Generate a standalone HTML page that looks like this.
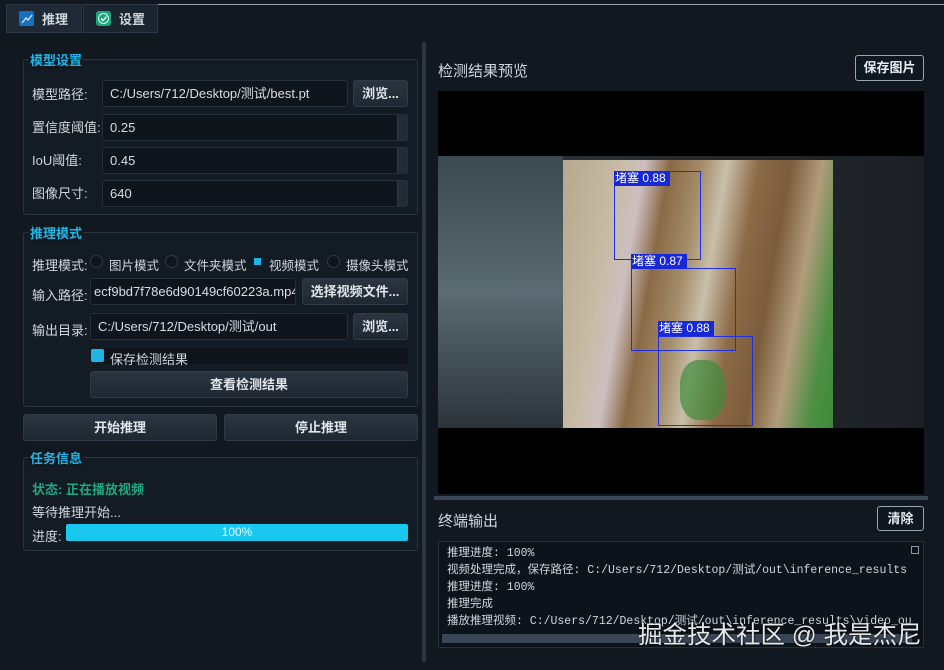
<!DOCTYPE html>
<html><head><meta charset="utf-8"><style>
*{margin:0;padding:0;box-sizing:border-box}
body{width:944px;height:670px;background:#111820;font-family:"Liberation Sans","Noto Sans CJK SC",sans-serif;font-size:13px;color:#d8dde3;position:relative;overflow:hidden}
.a{position:absolute}
.tab{position:absolute;top:4px;height:29px;background:#1b2530;border:1px solid #2c3845;color:#cfd6dd;font-size:13px;display:flex;align-items:center;padding-left:12px;gap:8px;font-weight:bold}
.grp{position:absolute;border:1px solid #2a3440;border-radius:3px;background:#131b24}
.gt{position:absolute;color:#1fb6e6;font-weight:bold;font-size:13px;background:#111820;padding:0 1px}
.lbl{position:absolute;font-size:13px;color:#d0d6dc;margin-top:-3px}
.inp{position:absolute;height:27px;background:#0f151c;border:1px solid #26303b;border-radius:3px;color:#d8dde3;font-size:13px;padding-left:7px;line-height:25px;overflow:hidden;white-space:nowrap}
.spin{position:absolute;right:0;top:0;width:10px;height:100%;background:#222c37;border-left:1px solid #2d3844}
.btn{position:absolute;height:27px;background:linear-gradient(#2a3541,#1f2832);border:1px solid #303b47;border-radius:3px;color:#e0e5ea;font-weight:bold;font-size:13px;text-align:center;line-height:25px}
.rad{position:absolute;width:13px;height:13px;border-radius:50%;border:1px solid #2e3944;background:#0f151c}
.mono{font-family:"Liberation Mono","Noto Sans CJK SC",monospace;font-size:11.5px;color:#d0d6dc;line-height:17px;white-space:nowrap}
</style></head><body>
<div class="a" style="left:158px;top:4px;width:786px;height:1px;background:#9aa3ad"></div>
<div class="tab" style="left:6px;width:76px;background:#1e2935"><span style="width:15px;height:15px;background:#1570c0;border-radius:2px;display:inline-block;position:relative"><svg width="15" height="15" style="position:absolute;left:0;top:0"><path d="M3 12 L7 7 L9 9 L13 4" stroke="#cfe8ff" stroke-width="1.3" fill="none"/></svg></span>推理</div>
<div class="tab" style="left:83px;width:75px"><span style="width:15px;height:15px;background:#1aa77a;border-radius:3px;display:inline-block;position:relative"><svg width="15" height="15" style="position:absolute;left:0;top:0"><circle cx="7.5" cy="7.5" r="5" stroke="#dff" stroke-width="1" fill="none"/><path d="M5 7.5 L7 9.5 L10.5 5.5" stroke="#fff" stroke-width="1.3" fill="none"/></svg></span>设置</div>

<div class="grp" style="left:23px;top:59px;width:395px;height:156px"></div>
<div class="gt" style="left:29px;top:50px">模型设置</div>
<div class="lbl" style="left:32px;top:87px">模型路径:</div>
<div class="inp" style="left:102px;top:80px;width:246px">C:/Users/712/Desktop/测试/best.pt</div>
<div class="btn" style="left:353px;top:80px;width:55px">浏览...</div>
<div class="lbl" style="left:32px;top:120px">置信度阈值:</div>
<div class="inp" style="left:102px;top:114px;width:306px">0.25<div class="spin"></div></div>
<div class="lbl" style="left:32px;top:153px">IoU阈值:</div>
<div class="inp" style="left:102px;top:147px;width:306px">0.45<div class="spin"></div></div>
<div class="lbl" style="left:32px;top:186px">图像尺寸:</div>
<div class="inp" style="left:102px;top:180px;width:306px">640<div class="spin"></div></div>

<div class="grp" style="left:23px;top:232px;width:395px;height:175px"></div>
<div class="gt" style="left:29px;top:223px">推理模式</div>
<div class="lbl" style="left:32px;top:258px">推理模式:</div>
<div class="rad" style="left:90px;top:255px"></div><div class="lbl" style="left:109px;top:258px;font-size:12.5px">图片模式</div>
<div class="rad" style="left:165px;top:255px"></div><div class="lbl" style="left:184px;top:258px;font-size:12.5px">文件夹模式</div>
<div class="a" style="left:254px;top:258px;width:7px;height:7px;background:#1fb6e6"></div><div class="lbl" style="left:269px;top:258px;font-size:12.5px">视频模式</div>
<div class="rad" style="left:327px;top:255px"></div><div class="lbl" style="left:346px;top:258px;font-size:12.5px">摄像头模式</div>
<div class="lbl" style="left:32px;top:288px">输入路径:</div>
<div class="inp" style="left:90px;top:278px;width:206px;padding-left:3px">ecf9bd7f78e6d90149cf60223a.mp4</div>
<div class="btn" style="left:302px;top:278px;width:106px">选择视频文件...</div>
<div class="lbl" style="left:32px;top:323px">输出目录:</div>
<div class="inp" style="left:90px;top:313px;width:258px">C:/Users/712/Desktop/测试/out</div>
<div class="btn" style="left:353px;top:313px;width:55px">浏览...</div>
<div class="a" style="left:91px;top:349px;width:13px;height:13px;background:#1fb6e6;border-radius:2px"></div>
<div class="a" style="left:104px;top:348px;width:304px;height:16px;background:#0e141a"></div>
<div class="lbl" style="left:110px;top:352px">保存检测结果</div>
<div class="btn" style="left:90px;top:371px;width:318px">查看检测结果</div>

<div class="btn" style="left:23px;top:414px;width:194px">开始推理</div>
<div class="btn" style="left:224px;top:414px;width:194px">停止推理</div>

<div class="grp" style="left:23px;top:457px;width:395px;height:94px"></div>
<div class="gt" style="left:29px;top:448px">任务信息</div>
<div class="lbl" style="left:32px;top:482px;color:#1ea883;font-weight:bold">状态: 正在播放视频</div>
<div class="lbl" style="left:32px;top:505px">等待推理开始...</div>
<div class="lbl" style="left:32px;top:529px">进度:</div>
<div class="a" style="left:66px;top:524px;width:342px;height:17px;background:#18c8ee;border-radius:2px;text-align:center;color:#eaf8ff;font-size:12px;line-height:17px">100%</div>

<div class="a" style="left:422px;top:42px;width:4px;height:620px;background:#2a3644"></div>

<div class="lbl" style="left:438px;top:63px;font-size:15px">检测结果预览</div>
<div class="a" style="left:855px;top:55px;width:69px;height:26px;border:1px solid #9aa6b2;border-radius:3px;background:#0f1722;color:#e8ecf0;font-weight:bold;text-align:center;line-height:24px">保存图片</div>
<div class="a" style="left:438px;top:91px;width:486px;height:403px;background:#000"></div>
<div class="a" style="left:438px;top:156px;width:486px;height:272px;background:linear-gradient(90deg,#46545c 0%,#3a464e 22%,#2a3035 26%,#1c2024 100%)"></div>
<div class="a" style="left:438px;top:156px;width:125px;height:272px;background:linear-gradient(180deg,#3b4850,#5b6b72 50%,#2c343a)"></div>
<div class="a" style="left:563px;top:160px;width:270px;height:268px;background:linear-gradient(100deg,#b5a88e 0%,#c8bba5 18%,#cdbfc0 26%,#8a6a45 34%,#a48c6a 44%,#c9c0aa 52%,#8c6a46 62%,#7b5c3c 72%,#b29c7c 82%,#4f8f45 92%,#3d8a3a 100%)"></div>
<div class="a" style="left:680px;top:360px;width:45px;height:60px;background:#3e8b3c;opacity:.7;border-radius:40%"></div>
<div class="a" style="left:614px;top:171px;width:87px;height:89px;border:1.5px solid #2030e0"></div>
<div class="a" style="left:614px;top:171px;width:56px;height:15px;background:#1828d8;color:#fff;font-size:12px;line-height:15px;padding-left:1px">堵塞 0.88</div>
<div class="a" style="left:631px;top:268px;width:105px;height:83px;border:1.5px solid #2030e0"></div>
<div class="a" style="left:631px;top:254px;width:56px;height:15px;background:#1828d8;color:#fff;font-size:12px;line-height:15px;padding-left:1px">堵塞 0.87</div>
<div class="a" style="left:658px;top:336px;width:95px;height:90px;border:1.5px solid #2030e0"></div>
<div class="a" style="left:658px;top:321px;width:56px;height:15px;background:#1828d8;color:#fff;font-size:12px;line-height:15px;padding-left:1px">堵塞 0.88</div>
<div class="a" style="left:434px;top:496px;width:494px;height:4px;background:#3a4656"></div>

<div class="lbl" style="left:438px;top:513px;font-size:15px">终端输出</div>
<div class="a" style="left:877px;top:506px;width:47px;height:25px;border:1px solid #9aa6b2;border-radius:3px;background:#0f1722;color:#e8ecf0;font-weight:bold;text-align:center;line-height:23px">清除</div>
<div class="a" style="left:438px;top:541px;width:486px;height:107px;border:1px solid #26303b;background:#0d131a;overflow:hidden">
<div class="mono" style="position:absolute;left:8px;top:3px">推理进度: 100%<br>视频处理完成，保存路径: C:/Users/712/Desktop/测试/out\inference_results<br>推理进度: 100%<br>推理完成<br>播放推理视频: C:/Users/712/Desktop/测试/out\inference_results\video_ou</div>
<div class="a" style="left:472px;top:4px;width:8px;height:8px;border:1px solid #8a96a2"></div>
<div class="a" style="left:3px;top:92px;width:470px;height:9px;background:#3a4656"></div>
</div>
<div class="a" style="left:638px;top:616px;font-size:24.5px;color:#e6e8ea;text-shadow:0 0 2px #000;white-space:nowrap">掘金技术社区 @ 我是杰尼</div>
</body></html>
